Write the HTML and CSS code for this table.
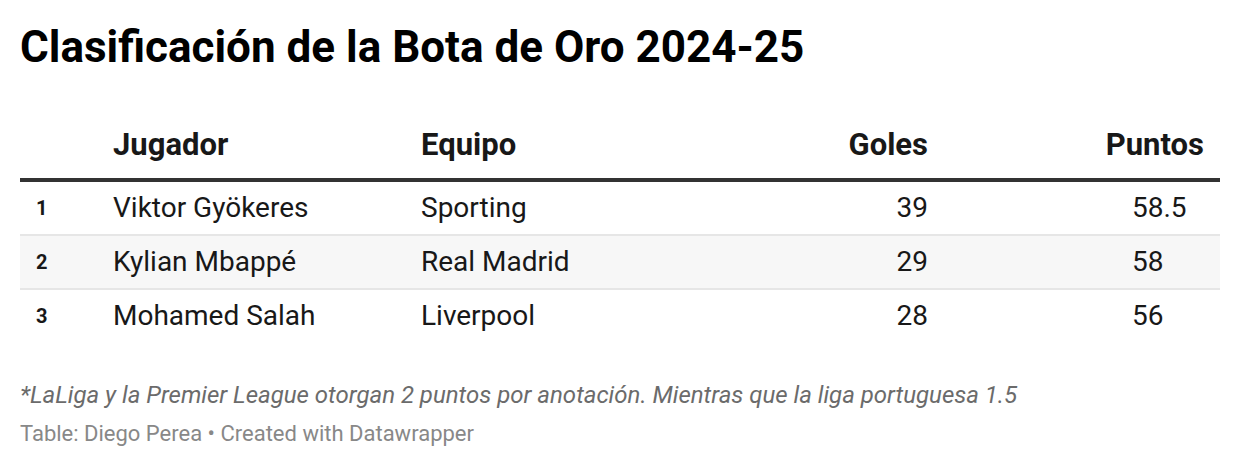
FILE: index.html
```html
<!DOCTYPE html>
<html lang="es">
<head>
    <meta charset="UTF-8">
    <meta name="viewport" content="width=device-width, initial-scale=1.0">
    <title>Clasificación de la Bota de Oro 2024-25</title>
    <link rel="stylesheet" href="styles.css">
</head>
<body>

    <div class="chart">
        <h1 class="title">Clasificación de la Bota de Oro 2024-25</h1>

        <table class="ranking">
            <thead>
                <tr>
                    <th class="rank"></th>
                    <th class="player">Jugador</th>
                    <th class="team">Equipo</th>
                    <th class="num goals">Goles</th>
                    <th class="num points">Puntos</th>
                </tr>
            </thead>
            <tbody>
                <tr>
                    <td class="rank">1</td>
                    <td class="player">Viktor Gyökeres</td>
                    <td class="team">Sporting</td>
                    <td class="num goals">39</td>
                    <td class="num points"><span class="dec">58.5</span></td>
                </tr>
                <tr class="striped">
                    <td class="rank">2</td>
                    <td class="player">Kylian Mbappé</td>
                    <td class="team">Real Madrid</td>
                    <td class="num goals">29</td>
                    <td class="num points"><span class="dec">58</span></td>
                </tr>
                <tr>
                    <td class="rank">3</td>
                    <td class="player">Mohamed Salah</td>
                    <td class="team">Liverpool</td>
                    <td class="num goals">28</td>
                    <td class="num points"><span class="dec">56</span></td>
                </tr>
            </tbody>
        </table>

        <p class="notes">*LaLiga y la Premier League otorgan 2 puntos por anotación. Mientras que la liga portuguesa 1.5</p>
        <p class="credit">Table: Diego Perea • Created with Datawrapper</p>
    </div>

</body>
</html>
```

FILE: styles.css
```css
body {
    margin: 0;
    font-family: Roboto, "Liberation Sans", Arial, sans-serif;
    color: #181818;
    background: #fff;
}

.chart {
    padding: 21px 20px 0 20px;
}

.title {
    margin: 0;
    font-size: 44px;
    line-height: 52px;
    font-weight: 700;
    color: #000;
}

.ranking {
    width: 100%;
    margin-top: 54px;
    border-collapse: collapse;
    table-layout: fixed;
    font-size: 28px;
}

.ranking th {
    font-size: 31px;
    font-weight: 700;
    text-align: left;
    padding: 0 16px 15px 16px;
    line-height: 36px;
    border-bottom: 4px solid #333;
}

.ranking td {
    height: 52px;
    padding: 0 16px;
    line-height: 30px;
    border-bottom: 2px solid #e6e6e6;
}

.ranking tbody tr:last-child td {
    border-bottom: none;
}

.ranking .striped td {
    background: #f7f7f7;
}

.rank {
    width: 45px;
}

td.rank {
    font-size: 20px;
    font-weight: 700;
}

.player {
    width: 276px;
}

.team {
    width: 200px;
}

.num {
    text-align: right !important;
}

.points {
    width: 244px;
}

td.points {
    padding-right: 33px;
}

.dec {
    display: inline-block;
    width: 55px;
    text-align: left;
}

.notes {
    margin: 38px 0 0 0;
    font-size: 24px;
    line-height: 30px;
    font-style: italic;
    color: #6b6b6b;
}

.credit {
    margin: 10px 0 0 0;
    font-size: 22px;
    line-height: 28px;
    color: #888;
}
```
